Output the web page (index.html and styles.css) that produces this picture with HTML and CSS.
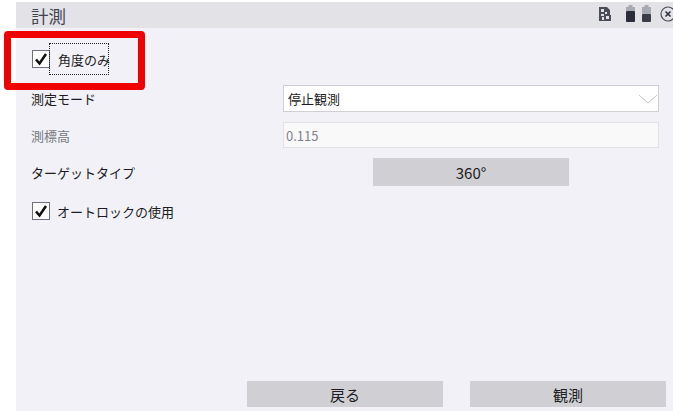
FILE: index.html
```html
<!DOCTYPE html>
<html lang="ja">
<head>
    <meta charset="UTF-8">
    <title>計測</title>
    <link rel="stylesheet" href="styles.css">
</head>
<body>
    <div class="screen">
        <div class="title-bar">
            <span class="title">計測</span>
            <div class="status-icons">
                <svg class="icon-card" width="12" height="14" viewBox="0 0 12 14">
                    <path d="M0 0h8l3 3v5h1v6H0z" fill="#4a4d58"/>
                    <rect x="2" y="2" width="3" height="3" fill="#dfdfe4"/>
                    <rect x="6" y="5" width="2" height="2" fill="#dfdfe4"/>
                    <rect x="2" y="7" width="3" height="2" fill="#dfdfe4"/>
                    <rect x="3" y="10" width="2" height="3" fill="#dfdfe4"/>
                    <rect x="7" y="9" width="3" height="3" fill="#dfdfe4"/>
                </svg>
                <svg class="icon-battery" width="9" height="17" viewBox="0 0 9 17">
                    <rect x="2.5" y="0" width="4" height="2" fill="#a9abb2"/>
                    <rect x="0" y="2" width="9" height="4" fill="#a9abb2"/>
                    <rect x="0" y="6" width="9" height="11" rx="1" fill="#2b2d3a"/>
                </svg>
                <svg class="icon-battery" width="9" height="17" viewBox="0 0 9 17">
                    <rect x="2.5" y="0" width="4" height="2" fill="#a9abb2"/>
                    <rect x="0" y="2" width="9" height="7" fill="#a9abb2"/>
                    <rect x="0" y="9" width="9" height="8" rx="1" fill="#3a3c48"/>
                </svg>
                <svg class="icon-close" width="16" height="16" viewBox="0 0 16 16">
                    <circle cx="8" cy="8" r="7" fill="none" stroke="#4a4d58" stroke-width="1.2"/>
                    <path d="M5.5 5.5l5 5M10.5 5.5l-5 5" stroke="#2b2d3a" stroke-width="1.5"/>
                </svg>
            </div>
        </div>

        <div class="content">
            <div class="check-row first">
                <span class="checkbox"><svg width="16" height="16" viewBox="0 0 16 16"><path d="M3 8.5l3.5 4 6.5-9.5" fill="none" stroke="#111" stroke-width="2.6"/></svg></span>
                <span class="check-label focused">角度のみ</span>
            </div>

            <div class="form-row mode-row">
                <span class="form-label">測定モード</span>
                <div class="select">
                    <span>停止観測</span>
                    <svg width="20" height="10" viewBox="0 0 20 10"><path d="M1 1l9 8 9-8" fill="none" stroke="#c4c6cc" stroke-width="1"/></svg>
                </div>
            </div>

            <div class="form-row height-row">
                <span class="form-label disabled">測標高</span>
                <div class="text-input">0.115</div>
            </div>

            <div class="form-row target-row">
                <span class="form-label">ターゲットタイプ</span>
                <button class="btn target-btn">360°</button>
            </div>

            <div class="check-row second">
                <span class="checkbox"><svg width="16" height="16" viewBox="0 0 16 16"><path d="M3 8.5l3.5 4 6.5-9.5" fill="none" stroke="#111" stroke-width="2.6"/></svg></span>
                <span class="check-label">オートロックの使用</span>
            </div>

            <div class="footer">
                <button class="btn">戻る</button>
                <button class="btn">観測</button>
            </div>
        </div>
    </div>

    <!-- callout drawn over the screenshot -->
    <div class="callout"></div>
</body>
</html>
```

FILE: styles.css
```css
/* General Styles */
html, body {
    height: 100%;
}

body {
    margin: 0;
    background-color: #fff;
    font-family: "Noto Sans CJK JP", "Noto Sans", sans-serif;
    font-size: 13px;
    color: #1c1c22;
    overflow: hidden;
}

.screen {
    height: 411px;
    box-sizing: border-box;
    margin-left: 16px;
    padding-top: 2px;
    display: flex;
    flex-direction: column;
}

/* Title bar */
.title-bar {
    height: 26px;
    flex: none;
    background-color: #e2e2e7;
    display: flex;
    align-items: center;
    justify-content: space-between;
    padding-left: 15px;
}

.title {
    font-size: 17.5px;
    color: #43454f;
}

.status-icons {
    display: flex;
    align-items: center;
    padding-bottom: 3px;
    margin-right: -3px;
}

.icon-card {
    margin-right: 15px;
}

.icon-battery {
    margin-right: 7px;
}

.icon-close {
    margin-left: 2px;
}

/* Form */
.content {
    flex: 1;
    background-color: #f1f1f7;
    display: flex;
    flex-direction: column;
    padding-left: 15px;
}

.check-row {
    display: flex;
    align-items: center;
    gap: 7px;
    padding-left: 1px;
}

.check-row.first {
    margin-top: 15px;
    height: 32px;
    gap: 0;
}

.check-row.second {
    margin-top: 16px;
    height: 18px;
}

.checkbox {
    width: 16px;
    height: 16px;
    flex: none;
    background-color: #fff;
    border: 1px solid #6f717a;
    display: flex;
}

.check-label.focused {
    width: 60px;
    height: 32px;
    margin-left: -1px;
    box-sizing: border-box;
    border: 1px dotted #222;
    display: flex;
    align-items: center;
    padding-left: 8px;
    white-space: nowrap;
}

.form-row {
    display: flex;
    align-items: center;
}

.form-label {
    width: 252px;
    flex: none;
}

.form-label.disabled {
    color: #77797f;
}

.mode-row {
    margin-top: 10px;
}

.height-row {
    margin-top: 10px;
}

.target-row {
    margin-top: 10px;
}

.select, .text-input {
    width: 376px;
    box-sizing: border-box;
    display: flex;
    align-items: center;
    justify-content: space-between;
}

.select {
    height: 27px;
    background-color: #fff;
    border: 1px solid #cfcfd4;
    padding: 0 0 0 4px;
}

.text-input {
    height: 26px;
    background-color: #f9f9fa;
    border: 1px solid #e2e2e6;
    color: #83848a;
    padding-left: 2px;
}

.btn {
    width: 196px;
    height: 26px;
    padding: 0;
    border: none;
    background-color: #cfcfd4;
    font-family: inherit;
    font-size: 15px;
    color: #1c1c22;
}

.target-btn {
    height: 28px;
    margin-left: 90px;
}

.footer {
    margin-top: auto;
    margin-bottom: 4px;
    display: flex;
    gap: 27px;
    padding-left: 216px;
}

/* Red callout */
.callout {
    position: absolute;
    left: 4px;
    top: 31px;
    width: 141px;
    height: 59px;
    box-sizing: border-box;
    border: 7px solid #f00000;
    border-radius: 4px;
}
```
